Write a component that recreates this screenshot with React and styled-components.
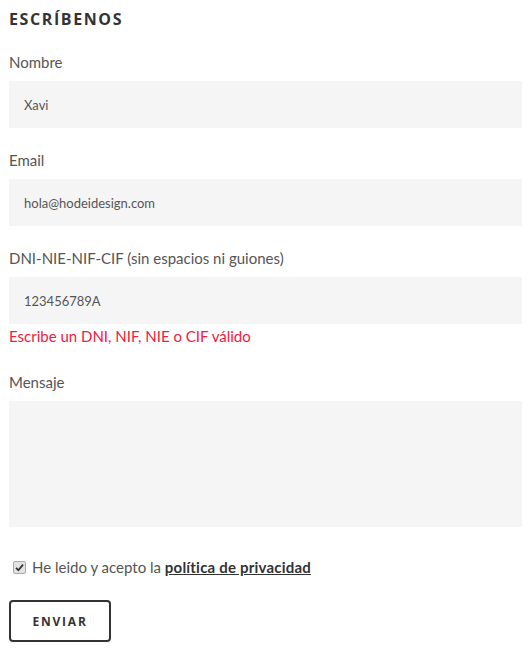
import React from "react";
import styled, { createGlobalStyle } from "styled-components";

const GlobalStyle = createGlobalStyle`
  body {
    margin: 0;
    background: #fff;
    font-family: "Lato", "Open Sans", sans-serif;
  }
`;

const Form = styled.form`
  padding: 9px 10px 0 9px;
  display: flex;
  flex-direction: column;
`;

const Title = styled.h3`
  margin: 0 0 23px;
  font-family: "Open Sans", sans-serif;
  font-weight: 700;
  font-size: 16px;
  line-height: 20px;
  letter-spacing: 1.6px;
  color: #333;
`;

const Field = styled.div`
  display: flex;
  flex-direction: column;
  margin-bottom: ${(p) => p.$gap || 22}px;
`;

const Label = styled.label`
  font-size: 15px;
  line-height: 20px;
  color: #555;
  margin-bottom: 9px;
`;

const Input = styled.input`
  box-sizing: border-box;
  width: 100%;
  height: 47px;
  border: 0;
  background: #f5f5f5;
  padding: 0 15px;
  font-family: "Lato", sans-serif;
  font-size: 13px;
  color: #555;
  outline: none;
`;

const TextArea = styled.textarea`
  box-sizing: border-box;
  width: 100%;
  height: 126px;
  border: 0;
  background: #f5f5f5;
  resize: none;
  outline: none;
`;

const Error = styled.span`
  margin-top: 2px;
  font-size: 15px;
  line-height: 20px;
  color: #f0203c;
`;

const CheckRow = styled.label`
  display: flex;
  align-items: center;
  gap: 6px;
  margin: 0 0 23px 4px;
  font-size: 15px;
  line-height: 20px;
  color: #555;

  a {
    color: #333;
    font-weight: 700;
    text-decoration: underline;
    letter-spacing: 0.2px;
  }
`;

const Box = styled.span`
  box-sizing: border-box;
  width: 13px;
  height: 13px;
  border: 1px solid #aaa;
  border-radius: 2px;
  background: #e2e2e2;
  display: flex;
  align-items: center;
  justify-content: center;
  color: #333;
`;

const Button = styled.button`
  box-sizing: border-box;
  width: 102px;
  height: 42px;
  border: 2px solid #333;
  border-radius: 4px;
  background: #fff;
  font-family: "Open Sans", sans-serif;
  font-weight: 700;
  font-size: 12px;
  letter-spacing: 1.8px;
  color: #333;
  cursor: pointer;
`;

export default function App() {
  return (
    <>
      <GlobalStyle />
      <Form onSubmit={(e) => e.preventDefault()}>
        <Title>ESCRÍBENOS</Title>
        <Field>
          <Label>Nombre</Label>
          <Input defaultValue="Xavi" />
        </Field>
        <Field>
          <Label>Email</Label>
          <Input defaultValue="hola@hodeidesign.com" />
        </Field>
        <Field $gap={26}>
          <Label>DNI-NIE-NIF-CIF (sin espacios ni guiones)</Label>
          <Input defaultValue="123456789A" />
          <Error>Escribe un DNI, NIF, NIE o CIF válido</Error>
        </Field>
        <Field $gap={30}>
          <Label>Mensaje</Label>
          <TextArea />
        </Field>
        <CheckRow>
          <Box>
            <svg width="9" height="9" viewBox="0 0 9 9">
              <path d="M1 4.8 L3.4 7.2 L8 1.6" fill="none" stroke="#333" strokeWidth="1.8" />
            </svg>
          </Box>
          <span>
            He leido y acepto la <a href="#">política de privacidad</a>
          </span>
        </CheckRow>
        <div>
          <Button type="submit">ENVIAR</Button>
        </div>
      </Form>
    </>
  );
}
